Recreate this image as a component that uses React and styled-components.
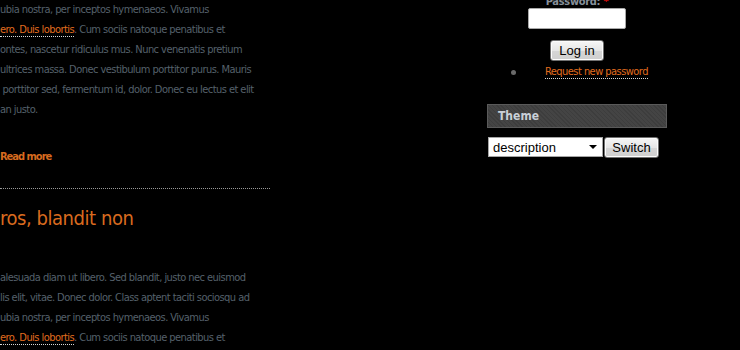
import React from "react";
import styled, { createGlobalStyle } from "styled-components";

const Global = createGlobalStyle`
  html, body { margin: 0; padding: 0; background: #000; }
  body { font-family: "DejaVu Sans Condensed", "Liberation Sans", sans-serif; overflow: hidden; }
`;

const Page = styled.div`
  display: flex;
  align-items: flex-start;
  width: 740px;
  height: 350px;
  overflow: hidden;
  background: #000;
`;

const Main = styled.div`
  width: 270px;
  margin-top: 0;
  flex: none;
`;

const TextBlock = styled.div`
  margin-top: ${(p) => p.$top || 0}px;
`;

const Line = styled.div`
  font-size: 11px;
  line-height: 20px;
  height: 20px;
  letter-spacing: -0.55px;
  color: #55606b;
  white-space: nowrap;
`;

const Link = styled.a`
  color: #e26d1f;
  text-decoration: none;
  border-bottom: 1px dotted #d8d8d8;
`;

const ReadMore = styled.a`
  display: block;
  margin-top: 27px;
  font-size: 11px;
  line-height: 20px;
  font-weight: bold;
  letter-spacing: -1px;
  color: #d66a1f;
  text-decoration: none;
`;

const Separator = styled.div`
  margin-top: 21px;
  border-top: 1px dotted #9a9a9a;
`;

const Heading = styled.h2`
  margin: 17px 0 0;
  font-size: 20px;
  line-height: 24px;
  font-weight: normal;
  letter-spacing: -0.45px;
  color: #d96b1f;
  white-space: nowrap;
`;

const Sidebar = styled.div`
  width: 180px;
  margin-left: 217px;
  margin-top: -5px;
  flex: none;
  display: flex;
  flex-direction: column;
`;

const LoginForm = styled.form`
  display: flex;
  flex-direction: column;
  align-items: center;
`;

const Label = styled.label`
  font-size: 11px;
  line-height: 14px;
  font-weight: bold;
  letter-spacing: -0.3px;
  color: #87909a;
`;

const Required = styled.span`
  color: #e01010;
`;

const TextInput = styled.input`
  box-sizing: border-box;
  width: 98px;
  height: 21px;
  margin: -1px 0 0;
  border: 1px solid #a9a9a9;
  border-radius: 2px;
  background: #fff;
`;

const Button = styled.button`
  box-sizing: border-box;
  height: 21px;
  width: ${(p) => p.$w}px;
  padding: 0;
  font-family: "Liberation Sans", Arial, sans-serif;
  font-size: 13px;
  color: #000;
  border: 1px solid #707070;
  border-radius: 3px;
  background: linear-gradient(#f6f6f6, #e6e6e6 50%, #d6d6d6 51%, #cfcfcf);
  box-shadow: inset 0 0 0 1px #fcfcfc;
  margin-top: ${(p) => p.$top || 0}px;
`;

const LinkList = styled.ul`
  list-style: none;
  margin: 5px 0 0;
  padding: 0 0 0 24px;
`;

const LinkItem = styled.li`
  display: flex;
  align-items: center;
  gap: 29px;
  font-size: 11px;
  line-height: 14px;
  letter-spacing: -0.55px;
`;

const Bullet = styled.span`
  width: 5px;
  height: 5px;
  border-radius: 50%;
  background: #6a6a6a;
  flex: none;
`;

const SmallLink = styled.a`
  color: #e26d1f;
  text-decoration: none;
  border-bottom: 1px dotted #d8d8d8;
  line-height: 12px;
`;

const BlockTitle = styled.h3`
  box-sizing: border-box;
  margin: 25px 0 0;
  height: 24px;
  padding: 0 10px;
  font-size: 12px;
  line-height: 22px;
  font-weight: bold;
  color: #c9d0d8;
  border: 1px solid #5a5a5a;
  background: repeating-linear-gradient(45deg, #3d3d3d 0 1px, #444 1px 3px);
`;

const SwitchRow = styled.form`
  display: flex;
  align-items: flex-end;
  gap: 1px;
  margin-top: 9px;
  padding-left: 1px;
`;

const Select = styled.div`
  box-sizing: border-box;
  width: 115px;
  height: 20px;
  margin-bottom: 1px;
  display: flex;
  align-items: center;
  justify-content: space-between;
  padding: 0 4px;
  background: #fff;
  border: 1px solid #a5a5a5;
  font-family: "Liberation Sans", Arial, sans-serif;
  font-size: 13px;
  color: #000;
`;

const Arrow = styled.span`
  width: 0;
  height: 0;
  border-left: 4px solid transparent;
  border-right: 4px solid transparent;
  border-top: 4px solid #000;
  margin-right: 1px;
`;

export default function App() {
  return (
    <>
      <Global />
      <Page>
        <Main>
          <TextBlock>
            <Line>ubia nostra, per inceptos hymenaeos. Vivamus</Line>
            <Line>
              <Link href="#">ero. Duis lobortis</Link>. Cum sociis natoque penatibus et
            </Line>
            <Line>ontes, nascetur ridiculus mus. Nunc venenatis pretium</Line>
            <Line>ultrices massa. Donec vestibulum porttitor purus. Mauris</Line>
            <Line>&nbsp;porttitor sed, fermentum id, dolor. Donec eu lectus et elit</Line>
            <Line>an justo.</Line>
          </TextBlock>
          <ReadMore href="#">Read more</ReadMore>
          <Separator />
          <Heading>ros, blandit non</Heading>
          <TextBlock $top={38}>
            <Line>alesuada diam ut libero. Sed blandit, justo nec euismod</Line>
            <Line>lis elit, vitae. Donec dolor. Class aptent taciti sociosqu ad</Line>
            <Line>ubia nostra, per inceptos hymenaeos. Vivamus</Line>
            <Line>
              <Link href="#">ero. Duis lobortis</Link>. Cum sociis natoque penatibus et
            </Line>
          </TextBlock>
        </Main>
        <Sidebar>
          <LoginForm onSubmit={(e) => e.preventDefault()}>
            <Label>
              Password: <Required>*</Required>
            </Label>
            <TextInput type="password" />
            <Button type="button" $w={54} $top={11}>Log in</Button>
          </LoginForm>
          <LinkList>
            <LinkItem>
              <Bullet />
              <SmallLink href="#">Request new password</SmallLink>
            </LinkItem>
          </LinkList>
          <BlockTitle>Theme</BlockTitle>
          <SwitchRow onSubmit={(e) => e.preventDefault()}>
            <Select>
              <span>description</span>
              <Arrow />
            </Select>
            <Button type="button" $w={55}>Switch</Button>
          </SwitchRow>
        </Sidebar>
      </Page>
    </>
  );
}
